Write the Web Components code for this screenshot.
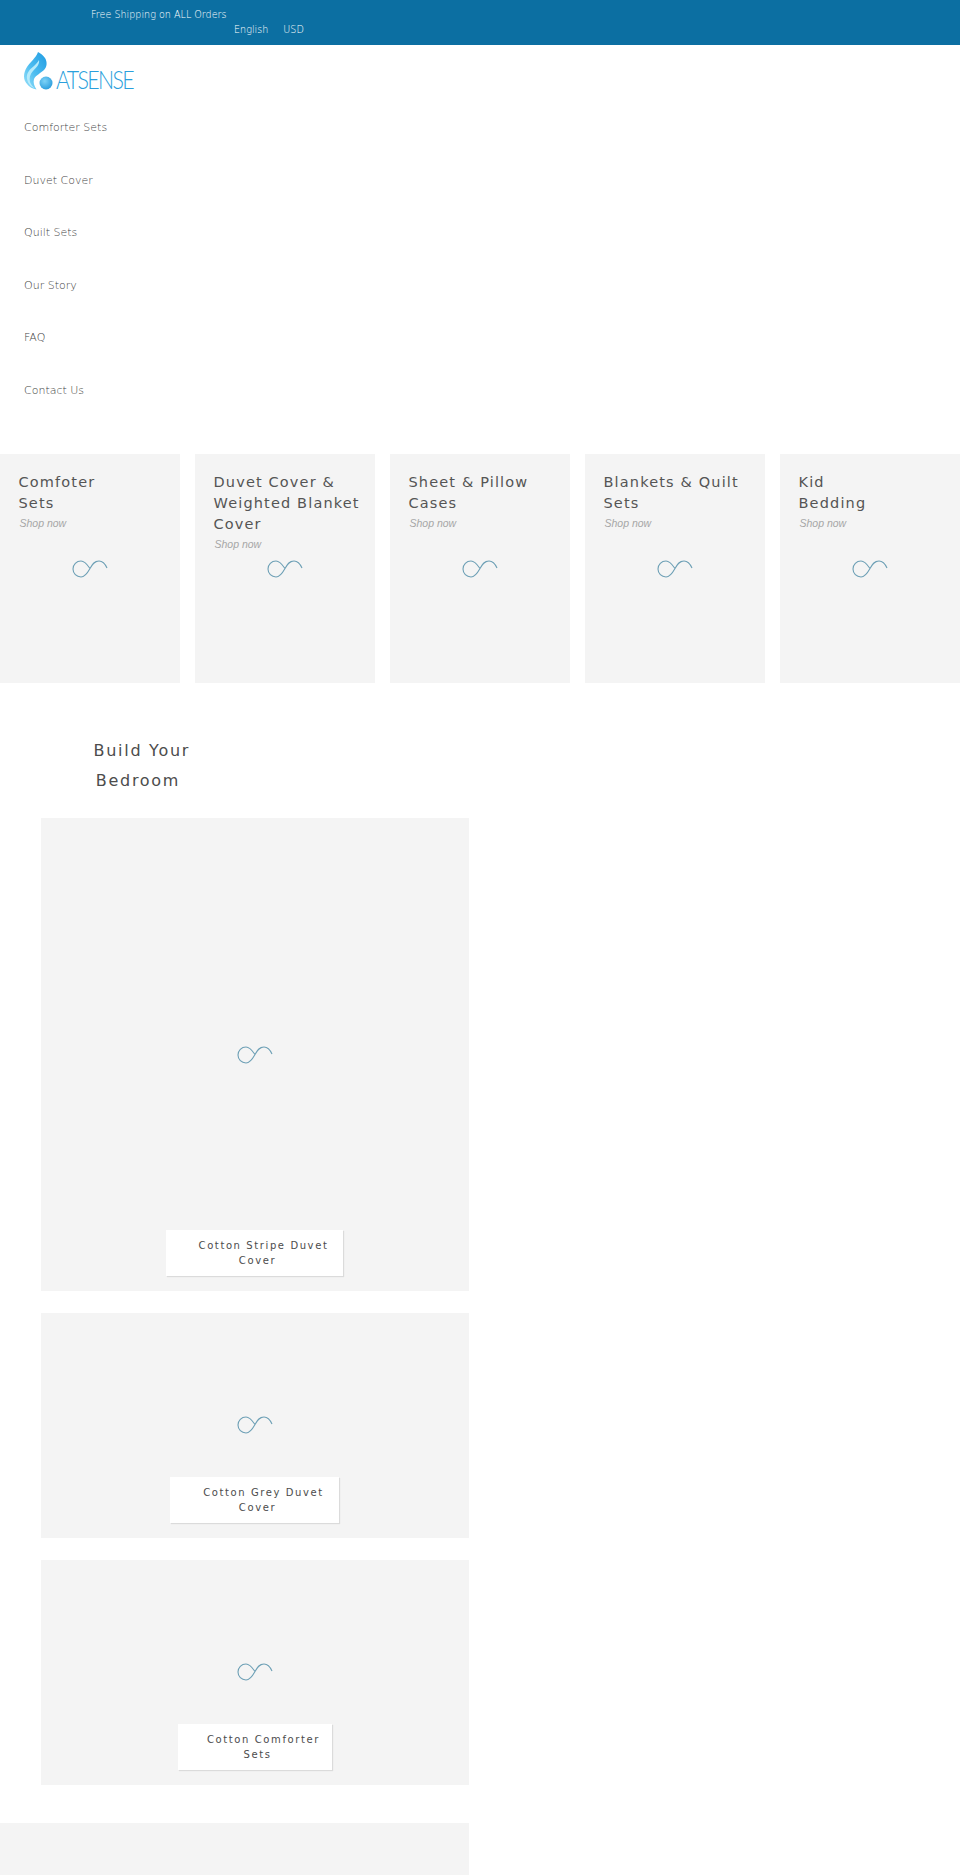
<!DOCTYPE html>
<html lang="en">
<head>
<meta charset="utf-8">
<title>Atsense</title>
<style>
    html, body{ margin: 0; padding: 0; background: #fff; }
    body{ font-family: "DejaVu Sans", sans-serif; }
</style>
</head>
<body>
<atsense-page></atsense-page>

<script>
const templateSpinner = document.createElement('template');
templateSpinner.innerHTML = `
    <style>
        :host{ display: block; width: 36px; height: 18px; }
        svg{ display: block; }
        path{ fill: none; stroke: #6c9fb5; stroke-width: 1.1; }
    </style>
    <svg width="36" height="18" viewBox="0 0 36 18">
        <path d="M35 8 C33 3.5 30 1 27 1 C22 1 20 5 18 8.5 C15.5 13 13 17 9 17 C4.5 17 1 13.5 1 9 C1 4.5 4.5 1 9 1 C13 1 15.5 5 18 8.5"></path>
    </svg>
`;
class SpinnerIcon extends HTMLElement{
    constructor(){
        super();
        this.attachShadow({mode: 'open'});
        this.shadowRoot.appendChild(templateSpinner.content.cloneNode(true));
    };
};
customElements.define("spinner-icon", SpinnerIcon);

const templatePromo = document.createElement('template');
templatePromo.innerHTML = `
    <style>
        :host{
            display: block;
            height: 45px;
            box-sizing: border-box;
            padding: 7px 0 0 91px;
            background: #0c6fa2;
            color: #fff;
            font-size: 9.6px;
            font-weight: 200;
            line-height: 15px;
        }
        #options{
            display: flex;
            gap: 15px;
            padding-left: 143px;
        }
    </style>
    <div>Free Shipping on ALL Orders</div>
    <div id="options"><span>English</span><span>USD</span></div>
`;
class PromoBar extends HTMLElement{
    constructor(){
        super();
        this.attachShadow({mode: 'open'});
        this.shadowRoot.appendChild(templatePromo.content.cloneNode(true));
    };
};
customElements.define("promo-bar", PromoBar);

const templateLogo = document.createElement('template');
templateLogo.innerHTML = `
    <style>
        :host{ display: block; width: 120px; height: 45px; }
        svg{ display: block; overflow: visible; }
        text{
            font-family: "Lato", "Liberation Sans", sans-serif;
            font-weight: 300;
            font-size: 26px;
            letter-spacing: -2px;
            fill: #2a9fdc;
        }
    </style>
    <svg width="120" height="45" viewBox="24 50 120 45">
        <defs>
            <linearGradient id="flame" x1="1" y1="0" x2="0" y2="1">
                <stop offset="0" stop-color="#1f9be2"></stop>
                <stop offset="0.55" stop-color="#4dbdf0"></stop>
                <stop offset="1" stop-color="#9fe3fa"></stop>
            </linearGradient>
            <radialGradient id="ball" cx="0.4" cy="0.35" r="0.8">
                <stop offset="0" stop-color="#7ed3f7"></stop>
                <stop offset="1" stop-color="#1c93d8"></stop>
            </radialGradient>
        </defs>
        <path fill="url(#flame)" d="M38 52 C36 58 30 62 27 67 C23 73 23 80 27 84 C29 87 33 89 36.5 89.5 C34 86 33 82 34 79 C36 75 41 73 44 70 C47 67 47.5 62 45 58 C43 55 40 53 38 52 Z"></path>
        <path fill="#b6ebfb" d="M39 60 C40 64 36 68 33 71 C30 74 29 78 30 82 C31 85 33 87 35 88.5 C31 87 28 84 27 79 C26 73 30 69 34 66 C36 64 38 62 39 60 Z"></path>
        <circle cx="46" cy="83" r="6.5" fill="url(#ball)"></circle>
        <text x="56" y="89" textLength="77" lengthAdjust="spacingAndGlyphs">ATSENSE</text>
    </svg>
`;
class SiteLogo extends HTMLElement{
    constructor(){
        super();
        this.attachShadow({mode: 'open'});
        this.shadowRoot.appendChild(templateLogo.content.cloneNode(true));
    };
};
customElements.define("site-logo", SiteLogo);

const templateNav = document.createElement('template');
templateNav.innerHTML = `
    <style>
        :host{
            display: flex;
            flex-direction: column;
            padding-left: 24px;
            color: #444;
            font-size: 11px;
            font-weight: 200;
        }
        a{
            display: block;
            height: 52.5px;
            line-height: 52.5px;
            color: inherit;
            text-decoration: none;
        }
    </style>
    <a href="#">Comforter Sets</a>
    <a href="#">Duvet Cover</a>
    <a href="#">Quilt Sets</a>
    <a href="#">Our Story</a>
    <a href="#">FAQ</a>
    <a href="#">Contact Us</a>
`;
class SiteNav extends HTMLElement{
    constructor(){
        super();
        this.attachShadow({mode: 'open'});
        this.shadowRoot.appendChild(templateNav.content.cloneNode(true));
    };
};
customElements.define("site-nav", SiteNav);

const templateCard = document.createElement('template');
templateCard.innerHTML = `
    <style>
        :host{
            display: grid;
            height: 229px;
            background: #f4f4f4;
        }
        #copy, #loader{ grid-area: 1 / 1; }
        #copy{
            padding: 18px 0 0 18.5px;
        }
        #title{
            color: #555;
            font-size: 14.5px;
            letter-spacing: 1.15px;
            line-height: 21px;
        }
        #shop{
            padding-left: 1px;
            font-family: "Liberation Sans", sans-serif;
            font-style: italic;
            font-size: 10.5px;
            line-height: 18px;
            color: #a6a6a6;
        }
        #loader{ place-self: center; }
    </style>
    <div id="copy">
        <div id="title"><slot></slot></div>
        <div id="shop">Shop now</div>
    </div>
    <spinner-icon id="loader"></spinner-icon>
`;
class CategoryCard extends HTMLElement{
    constructor(){
        super();
        this.attachShadow({mode: 'open'});
        this.shadowRoot.appendChild(templateCard.content.cloneNode(true));
    };
};
customElements.define("category-card", CategoryCard);

const templateTile = document.createElement('template');
templateTile.innerHTML = `
    <style>
        :host{
            display: grid;
            background: #f4f4f4;
        }
        #loader, #label{ grid-area: 1 / 1; }
        #loader{ place-self: center; }
        #label{
            align-self: end;
            justify-self: center;
            box-sizing: border-box;
            margin-bottom: 14.7px;
            padding: 9px 0 8px 5px;
            background: #fff;
            box-shadow: 1px 1px 1px rgba(0, 0, 0, 0.1);
            color: #4c4c4c;
            font-size: 10px;
            letter-spacing: 1.6px;
            line-height: 14.5px;
            text-align: center;
            text-indent: 12px;
            white-space: nowrap;
        }
    </style>
    <spinner-icon id="loader"></spinner-icon>
    <div id="label"><slot></slot></div>
`;
class PhotoTile extends HTMLElement{
    constructor(){
        super();
        this.attachShadow({mode: 'open'});
        this.shadowRoot.appendChild(templateTile.content.cloneNode(true));
    };

    connectedCallback(){
        this.style.height = this.getAttribute("tileHeight");
        this.shadowRoot.getElementById("label").style.width = this.getAttribute("labelWidth");
    };
};
customElements.define("photo-tile", PhotoTile);

const templatePage = document.createElement('template');
templatePage.innerHTML = `
    <style>
        :host{ display: block; height: 1875px; overflow: hidden; }
        #logo-row{ padding: 5px 0 0 24px; height: 57px; box-sizing: border-box; }
        #cards{
            display: grid;
            grid-template-columns: repeat(5, 180px);
            gap: 15px;
            margin-top: 37px;
        }
        #build{
            width: 468.7px;
            margin-top: 52.6px;
        }
        h2{
            width: 276px;
            margin: 0;
            color: #4c4c4c;
            font-size: 16px;
            font-weight: 400;
            letter-spacing: 1.7px;
            line-height: 30px;
            text-align: center;
            text-indent: 7.6px;
        }
        #tiles{
            display: grid;
            row-gap: 22px;
            margin: 22.8px 0 0 41.3px;
        }
        #tail{
            width: 468.7px;
            height: 60px;
            margin-top: 37.7px;
            background: #f4f4f4;
        }
    </style>
    <promo-bar></promo-bar>
    <div id="logo-row"><site-logo></site-logo></div>
    <site-nav></site-nav>
    <div id="cards">
        <category-card>Comfoter<br>Sets</category-card>
        <category-card>Duvet Cover &amp;<br>Weighted Blanket<br>Cover</category-card>
        <category-card>Sheet &amp; Pillow<br>Cases</category-card>
        <category-card>Blankets &amp; Quilt<br>Sets</category-card>
        <category-card>Kid<br>Bedding</category-card>
    </div>
    <div id="build">
        <h2>Build Your<br>Bedroom</h2>
        <div id="tiles">
            <photo-tile tileHeight="472.4px" labelWidth="177px">Cotton Stripe Duvet<br>Cover</photo-tile>
            <photo-tile tileHeight="225.15px" labelWidth="169px">Cotton Grey Duvet<br>Cover</photo-tile>
            <photo-tile tileHeight="225.15px" labelWidth="154px">Cotton Comforter<br>Sets</photo-tile>
        </div>
    </div>
    <div id="tail"></div>
`;
class AtsensePage extends HTMLElement{
    constructor(){
        super();
        this.attachShadow({mode: 'open'});
        this.shadowRoot.appendChild(templatePage.content.cloneNode(true));
    };
};
customElements.define("atsense-page", AtsensePage);
</script>
</body>
</html>
